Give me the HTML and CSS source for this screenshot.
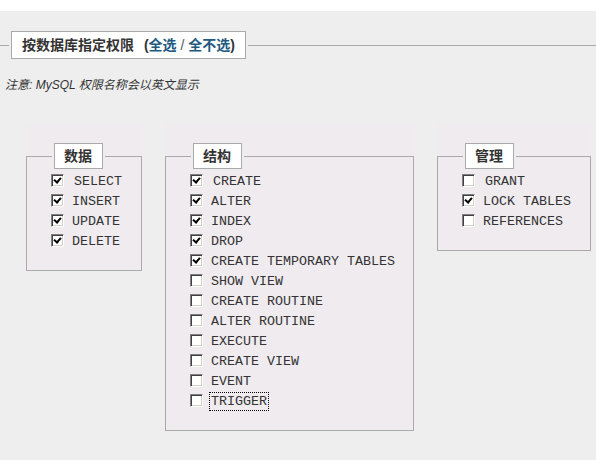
FILE: index.html
```html
<!DOCTYPE html>
<html lang="zh-CN">
<head>
  <meta charset="UTF-8">
  <title>按数据库指定权限</title>
  <link rel="stylesheet" href="styles.css">
</head>
<body>
  <div class="strip"></div>

  <fieldset class="choose">
    <legend><span class="legend-box">按数据库指定权限 <span class="toggles">(<a href="#">全选</a> <span class="sep">/</span> <a href="#">全不选</a>)</span></span></legend>
    <p class="note">注意: MySQL 权限名称会以英文显示</p>
  </fieldset>

  <div class="groups">
    <div class="group g-data">
      <fieldset>
        <legend><span class="legend-box">数据</span></legend>
        <label class="first"><input type="checkbox" checked>SELECT</label>
        <label><input type="checkbox" checked>INSERT</label>
        <label><input type="checkbox" checked>UPDATE</label>
        <label><input type="checkbox" checked>DELETE</label>
      </fieldset>
    </div>

    <div class="group g-struct">
      <fieldset>
        <legend><span class="legend-box">结构</span></legend>
        <label class="first"><input type="checkbox" checked>CREATE</label>
        <label><input type="checkbox" checked>ALTER</label>
        <label><input type="checkbox" checked>INDEX</label>
        <label><input type="checkbox" checked>DROP</label>
        <label><input type="checkbox" checked>CREATE TEMPORARY TABLES</label>
        <label><input type="checkbox">SHOW VIEW</label>
        <label><input type="checkbox">CREATE ROUTINE</label>
        <label><input type="checkbox">ALTER ROUTINE</label>
        <label><input type="checkbox">EXECUTE</label>
        <label><input type="checkbox">CREATE VIEW</label>
        <label><input type="checkbox">EVENT</label>
        <label><input type="checkbox"><span class="focused">TRIGGER</span></label>
      </fieldset>
    </div>

    <div class="group g-admin">
      <fieldset>
        <legend><span class="legend-box">管理</span></legend>
        <label class="first"><input type="checkbox">GRANT</label>
        <label><input type="checkbox" checked>LOCK TABLES</label>
        <label><input type="checkbox">REFERENCES</label>
      </fieldset>
    </div>
  </div>
</body>
</html>
```

FILE: styles.css
```css
body {
  margin: 0;
  padding: 0;
  background-color: #eeeeee;
  color: #333;
  font-family: "Liberation Sans", "Noto Sans CJK SC", sans-serif;
  font-size: 12px;
}

.strip {
  height: 11px;
  background-color: #fff;
}

fieldset {
  margin: 0;
  padding: 0;
  min-width: 0;
}

legend {
  padding: 0 2px;
}

.legend-box {
  display: block;
  background-color: #fff;
  border: 1px solid #aaa;
  color: #333;
  font-weight: bold;
  font-size: 14px;
  line-height: 16px;
}

/* top block */
.choose {
  margin-top: 20px;
  border: 0;
  border-top: 1px solid #aaa;
}

.choose legend {
  margin-left: 9px;
}

.choose .legend-box {
  padding: 5px 10px;
}

.toggles {
  margin-left: 6px;
}

.toggles a {
  color: #235a81;
  text-decoration: none;
}

.sep {
  font-weight: normal;
  color: #555;
}

.note {
  margin: 18px 0 0;
  padding-left: 5px;
  font-style: italic;
  line-height: 16px;
  color: #333;
}

/* privilege groups */
.groups {
  display: flex;
  align-items: flex-start;
  gap: 23px;
  margin-top: 31px;
  padding-left: 26px;
}

.group {
  background-color: #efebef;
  padding-top: 19px;
}

.g-data { width: 116px; }
.g-struct { width: 249px; }
.g-admin { width: 154px; }

.group fieldset {
  border: 1px solid #aaa;
  padding: 2px 0 19px 24px;
}

.group legend {
  margin-left: 1px;
}

.group .legend-box {
  padding: 4px 10px 4px 9px;
}

label {
  display: flex;
  align-items: center;
  height: 20px;
  font-family: "Liberation Mono", monospace;
  font-size: 13.33px;
  color: #333;
  white-space: nowrap;
}

input[type="checkbox"] {
  -webkit-appearance: none;
  appearance: none;
  position: relative;
  box-sizing: border-box;
  width: 13px;
  height: 13px;
  margin: -1px 8px 0 0;
  background-color: #fff;
  border-top: 1px solid #808080;
  border-left: 1px solid #808080;
  border-right: 1px solid #fff;
  border-bottom: 1px solid #fff;
  box-shadow: inset 1px 1px 0 #404040, inset -1px -1px 0 #d4d0c8;
  flex-shrink: 0;
}

label.first input[type="checkbox"] {
  margin-right: 10px;
}

input[type="checkbox"]:checked::after {
  content: "";
  position: absolute;
  left: 3px;
  top: 1px;
  width: 3px;
  height: 5px;
  border-right: 2px solid #000;
  border-bottom: 2px solid #000;
  transform: rotate(40deg);
}

.focused {
  outline: 1px dotted #000;
  outline-offset: 1px;
}
```
